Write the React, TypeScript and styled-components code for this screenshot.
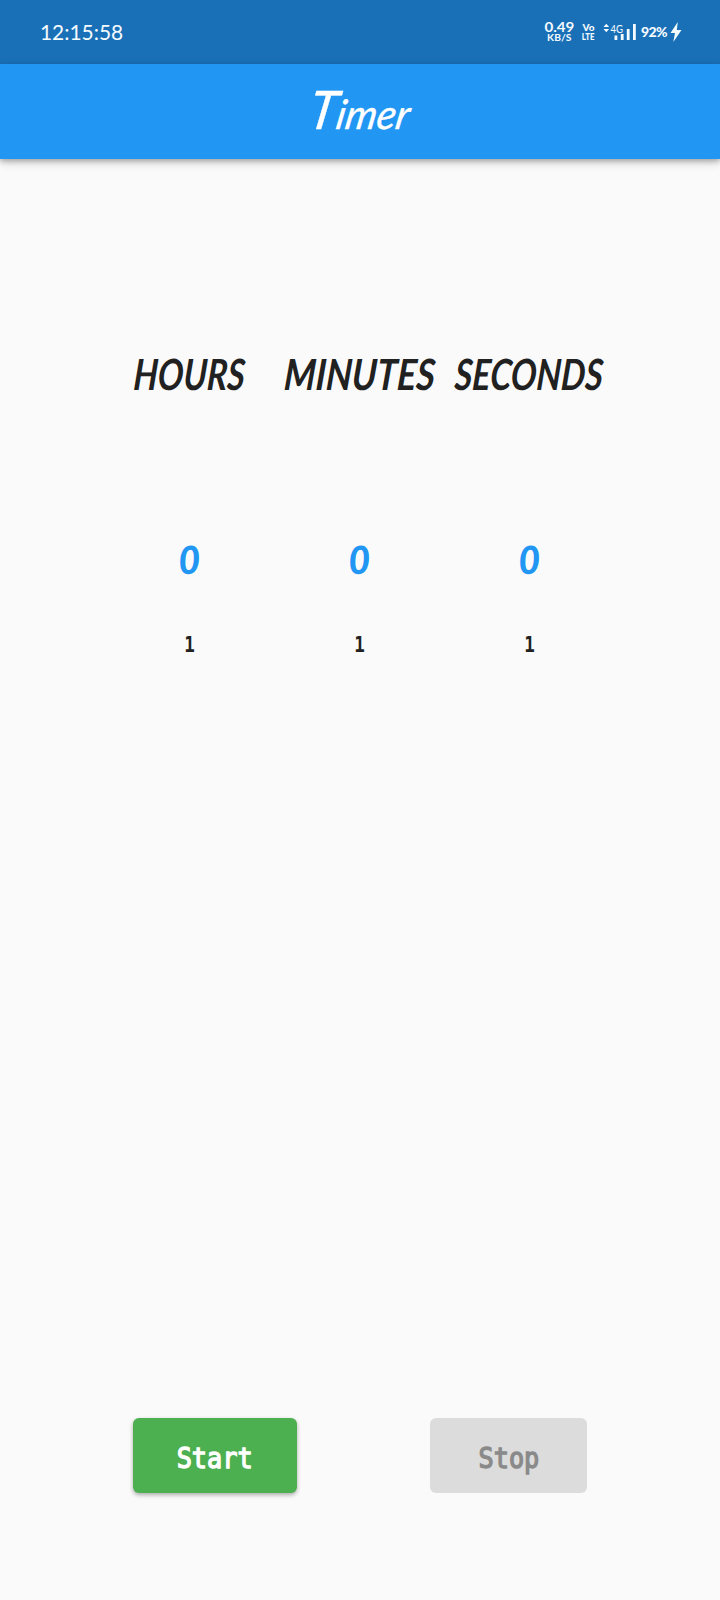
import React from 'react';
import styled, { createGlobalStyle } from 'styled-components';

const GlobalStyle = createGlobalStyle`
  *, *::before, *::after { box-sizing: border-box; }
  html, body { margin: 0; background: #fafafa; }
  body { font-family: Lato, sans-serif; }
`;

const Screen = styled.main`
  display: flex;
  flex-direction: column;
  width: 720px;
  height: 1600px;
  background: #fafafa;
  overflow: hidden;
`;

const StatusBar = styled.header`
  display: flex;
  align-items: center;
  height: 64px;
  flex: none;
  padding: 0 38px 0 40px;
  background: #1a70b7;
  color: #f4fbff;
`;

const Clock = styled.time`
  margin-right: auto;
  font: 400 22px/28px Lato, sans-serif;
  transform: scaleX(0.95);
  transform-origin: left center;
`;

const Stack = styled.div<{ $width: number; $gap: number }>`
  display: flex;
  flex-direction: column;
  align-items: center;
  width: ${(p) => p.$width}px;
  margin-right: ${(p) => p.$gap}px;
  white-space: nowrap;
`;

const Tiny = styled.span<{ $size: number; $line: number; $stretch?: number; $weight?: number }>`
  font: ${(p) => p.$weight ?? 700} ${(p) => p.$size}px/${(p) => p.$line}px Lato, sans-serif;
  transform: scaleX(${(p) => p.$stretch ?? 1});
`;

const Signal = styled.svg`
  display: block;
  width: 34px;
  height: 20px;
  margin-right: 4px;
`;

const Battery = styled.span`
  width: 27px;
  margin-right: 2px;
  font: 900 14px/20px Lato, sans-serif;
  letter-spacing: -0.6px;
  white-space: nowrap;
`;

const AppBar = styled.div`
  display: flex;
  justify-content: center;
  align-items: center;
  flex: none;
  height: 95px;
  background: #2196f3;
  box-shadow: 0 2px 5px rgba(0, 0, 0, 0.24), 0 4px 9px rgba(0, 0, 0, 0.16);
  z-index: 1;
`;

const Title = styled.h1`
  margin: 0;
  color: #fff;
  font: italic 400 41px/60px Lato, sans-serif;
  -webkit-text-stroke: 0.4px currentColor;
  transform: translate(0, 0) skewX(-10deg) scaleX(0.97);
  &::first-letter { font-size: 53px; }
`;

const Columns = styled.section`
  display: grid;
  grid-template-columns: repeat(3, 170px);
  margin: 185px 0 0 104.5px;
`;

const Column = styled.div`
  display: flex;
  flex-direction: column;
  align-items: center;
`;

const Heading = styled.h2<{ $stretch: number }>`
  margin: 0;
  color: #212121;
  font: italic 700 43px/60px Lato, sans-serif;
  transform: scaleX(${(p) => p.$stretch}) skewX(-5deg);
  white-space: nowrap;
`;

const Value = styled.strong`
  margin-top: 125px;
  color: #2196f3;
  font: italic 900 39px/60px Lato, sans-serif;
  transform: skewX(1deg) scaleX(0.95);
`;

const Next = styled.span`
  margin-top: 41px;
  color: #212121;
  font: 700 22px/30px 'DejaVu Sans Mono', monospace;
  transform: scaleX(0.8);
`;

const Actions = styled.footer`
  display: flex;
  gap: 133px;
  margin: auto 0 107px 133px;
`;

const Button = styled.button<{ $width: number }>`
  display: flex;
  align-items: center;
  justify-content: center;
  width: ${(p) => p.$width}px;
  height: 75px;
  padding: 0;
  border: 0;
  border-radius: 6px;
  background: #4caf50;
  color: #fff;
  box-shadow: 0 2px 4px rgba(0, 0, 0, 0.32);
  &:disabled {
    background: #dcdcdc;
    color: #8a8a8a;
    box-shadow: none;
  }
`;

const Label = styled.span`
  font: 400 29px/40px 'DejaVu Sans Mono', monospace;
  -webkit-text-stroke: 1.4px currentColor;
  transform: translateY(2px) scaleX(0.87);
`;

const units = [
  { name: 'HOURS', stretch: 0.79 },
  { name: 'MINUTES', stretch: 0.84 },
  { name: 'SECONDS', stretch: 0.795 },
];

export default function App() {
  return (
    <Screen>
      <GlobalStyle />
      <StatusBar>
        <Clock>12:15:58</Clock>
        <Stack $width={30} $gap={8}>
          <Tiny $size={13.5} $line={11} $stretch={1.12}>0.49</Tiny>
          <Tiny $size={9.5} $line={10} $stretch={1.08}>KB/S</Tiny>
        </Stack>
        <Stack $width={13} $gap={8}>
          <Tiny $size={10} $line={9} $weight={900}>Vo</Tiny>
          <Tiny $size={10} $line={9} $stretch={0.78} $weight={900}>LTE</Tiny>
        </Stack>
        <Signal viewBox="0 0 34 20" fill="currentColor">
          <path d="M0.5 5L3.3 1.8L6.1 5ZM0.5 7L3.3 10.2L6.1 7Z" />
          <text x="7.5" y="10.5" fontFamily="Lato, sans-serif" fontSize="12" textLength="12.5" lengthAdjust="spacingAndGlyphs">4G</text>
          <rect x="11.5" y="13.5" width="2.8" height="4.5" />
          <rect x="17.8" y="12" width="2.8" height="6" />
          <rect x="23.8" y="7" width="2.8" height="11" />
          <rect x="30" y="2" width="2.8" height="16" />
        </Signal>
        <Battery>92%</Battery>
        <svg width="12" height="20" viewBox="0 0 12 20" fill="currentColor">
          <path d="M7.8 0L0.5 11H5L3.3 20L11.5 8H6.8Z" />
        </svg>
      </StatusBar>
      <AppBar>
        <Title>Timer</Title>
      </AppBar>
      <Columns>
        {units.map((unit) => (
          <Column key={unit.name}>
            <Heading $stretch={unit.stretch}>{unit.name}</Heading>
            <Value>0</Value>
            <Next>1</Next>
          </Column>
        ))}
      </Columns>
      <Actions>
        <Button $width={164}><Label>Start</Label></Button>
        <Button $width={157} disabled><Label>Stop</Label></Button>
      </Actions>
    </Screen>
  );
}
